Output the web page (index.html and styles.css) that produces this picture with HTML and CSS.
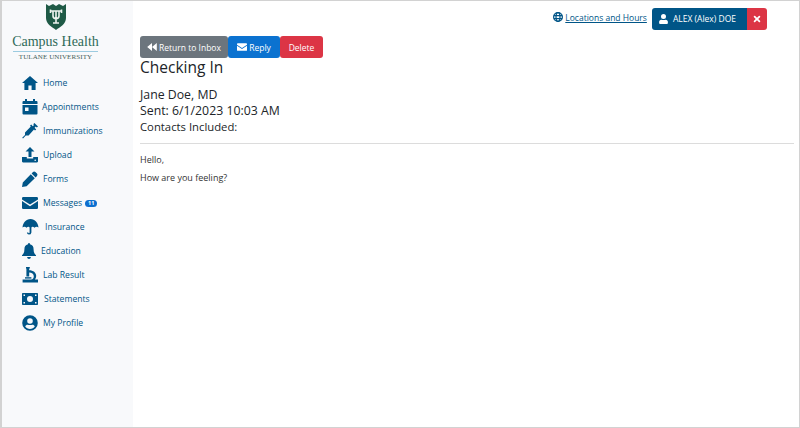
FILE: index.html
```html
<!DOCTYPE html>
<html lang="en">
<head>
<meta charset="utf-8">
<title>Message</title>
<link rel="stylesheet" href="styles.css">
</head>
<body>
<div class="frame">
  <aside class="sidebar">
    <div class="logo">
      <svg class="shield" width="20" height="26" viewBox="0 0 20 26">
        <path d="M0 0 L3 2 L7 0 L10 2 L13 0 L17 2 L20 0 V14 C20 20 14 23 10 26 C6 23 0 20 0 14 Z" fill="#1f5a46"/>
        <path d="M4.5 7 H15.5 M4.5 5.5 V9 M15.5 5.5 V9 M10 7 V19 M7 19 H13 M7 7 V12 C7 15.5 13 15.5 13 12 V7" stroke="#eef3ef" stroke-width="1.6" fill="none"/>
      </svg>
      <div class="logo-name">Campus Health</div>
      <div class="logo-rule"></div>
      <div class="logo-sub">TULANE UNIVERSITY</div>
    </div>
    <nav class="nav">
      <a class="nav-item"><svg class="ico" viewBox="0 0 16 16"><path d="M8 1 L16 8 H13.6 V15 H9.6 V10.4 H6.4 V15 H2.4 V8 H0 Z"/></svg><span class="gap-home">Home</span></a>
      <a class="nav-item"><svg class="ico" viewBox="0 0 16 16"><path d="M3 0 H5 V2 H11 V0 H13 V2 H14.5 Q15.5 2 15.5 3 V5 H.5 V3 Q.5 2 1.5 2 H3 Z M.5 6 H15.5 V14.5 Q15.5 15.5 14.5 15.5 H1.5 Q.5 15.5 .5 14.5 Z"/><rect x="3" y="8.5" width="3.5" height="3.5" fill="#f8f9fb"/></svg><span class="gap-appt">Appointments</span></a>
      <a class="nav-item"><svg class="ico" viewBox="0 0 16 16"><path d="M12.4 0 L16 3.6 L14.8 4.6 L13.8 3.6 L12.6 4.8 L14.2 6.4 L13 7.6 L12 6.6 L6.6 12.4 L3.8 12.6 L1 15.4 L.2 14.8 L3 12 L3 9.4 L8.8 3.6 L8 2.8 L9.2 1.6 L10.8 3.2 L12 2 L11.2 1.2 Z"/></svg><span class="gap-home">Immunizations</span></a>
      <a class="nav-item"><svg class="ico" viewBox="0 0 16 16"><path d="M8 0 L12.5 4.6 H9.5 V10 H6.5 V4.6 H3.5 Z M0 10 H4.8 V11.6 H11.2 V10 H16 V14.6 Q16 15.4 15 15.4 H1 Q0 15.4 0 14.6 Z"/><circle cx="13.2" cy="13.2" r=".8" fill="#f8f9fb"/></svg><span class="gap-up">Upload</span></a>
      <a class="nav-item"><svg class="ico" viewBox="0 0 16 16"><path d="M11 1 Q12.2 0 13.4 1 L15 2.6 Q16 3.8 15 5 L13.6 6.4 L9.6 2.4 Z M8.8 3.2 L12.8 7.2 L4.6 15.2 L0 16 L.8 11.4 Z"/></svg><span class="gap-up">Forms</span></a>
      <a class="nav-item"><svg class="ico" viewBox="0 0 16 16"><path d="M1.2 2 H14.8 Q16 2 16 3.4 V4.4 L8 9.6 L0 4.4 V3.4 Q0 2 1.2 2 Z M0 6 L8 11.2 L16 6 V13 Q16 14 14.8 14 H1.2 Q0 14 0 13 Z"/></svg><span class="gap-up">Messages</span><span class="badge">11</span></a>
      <a class="nav-item"><svg class="ico ico-wide" viewBox="0 0 16 16"><path d="M8 0 C12.5 .3 15.6 3.6 16 8.6 C14.8 7.6 13.2 7.6 12 8.8 C11 7.6 9.4 7.6 8.9 8.4 V13.4 Q8.6 15.6 6.4 15.6 Q4.6 15.4 4.4 13.6 H5.8 Q5.9 14.2 6.4 14.2 Q7.1 14.1 7.1 13.4 V8.4 C6.6 7.6 5 7.6 4 8.8 C2.8 7.6 1.2 7.6 0 8.6 C.4 3.6 3.5 .3 8 0 Z"/></svg><span class="gap-ins">Insurance</span></a>
      <a class="nav-item"><svg class="ico ico-narrow" viewBox="0 0 14 16"><path d="M7 0 Q8 0 8 1.2 C10.6 1.8 11.6 3.8 11.6 6.4 C11.6 9.6 12.6 10.8 14 12.2 V13 H0 V12.2 C1.4 10.8 2.4 9.6 2.4 6.4 C2.4 3.8 3.4 1.8 6 1.2 Q6 0 7 0 Z M5 14 H9 Q8.6 16 7 16 Q5.4 16 5 14 Z"/></svg><span class="gap-edu">Education</span></a>
      <a class="nav-item"><svg class="ico" viewBox="0 0 16 16"><path d="M4 0 H7.8 V1.5 H7.2 V3.2 C11.2 3.2 14.2 5.6 14.2 9 Q14.2 11 13 12.4 H16 V15.4 H.6 V12.4 H9 C11 12.4 11.8 11 11.8 9.2 C11.8 7.2 9.8 5.6 7.2 5.6 V9.5 H4.4 V1.5 H4 Z"/><rect x="3" y="10.2" width="6.4" height="1.4"/></svg><span class="gap-up">Lab Result</span></a>
      <a class="nav-item"><svg class="ico ico-cash" viewBox="0 0 16 12"><path fill-rule="evenodd" d="M.8 0 H15.2 Q16 0 16 .8 V11.2 Q16 12 15.2 12 H.8 Q0 12 0 11.2 V.8 Q0 0 .8 0 Z M8 3 A3 3 0 1 0 8 9 A3 3 0 1 0 8 3 Z M1.5 1.5 V3 H3 V1.5 Z M13 1.5 V3 H14.5 V1.5 Z M1.5 9 V10.5 H3 V9 Z M13 9 V10.5 H14.5 V9 Z"/></svg><span class="gap-stmt">Statements</span></a>
      <a class="nav-item"><svg class="ico" viewBox="0 0 16 16"><path fill-rule="evenodd" d="M8 .2 A7.8 7.8 0 1 0 8 15.8 A7.8 7.8 0 1 0 8 .2 Z M8 3.2 A2.8 2.8 0 1 1 8 8.8 A2.8 2.8 0 1 1 8 3.2 Z M8 14 C6 14 4.2 13 3.2 11.6 C3.6 10.4 4.6 9.8 5.6 9.8 C6.6 10.2 9.4 10.2 10.4 9.8 C11.4 9.8 12.4 10.4 12.8 11.6 C11.8 13 10 14 8 14 Z"/></svg><span class="gap-up">My Profile</span></a>
    </nav>
  </aside>
  <main class="main">
    <header class="topbar">
      <a class="loc"><svg class="globe" viewBox="0 0 16 16"><g fill="none" stroke="#005587" stroke-width="2"><circle cx="8" cy="8" r="7"/><ellipse cx="8" cy="8" rx="3.2" ry="7"/><path d="M1.4 5.6 H14.6 M1.4 10.4 H14.6"/></g></svg> <span class="loc-text">Locations and Hours</span></a>
      <div class="user-group">
        <span class="user-btn"><svg class="user-ico" viewBox="0 0 14 16"><path d="M7 0 A4 4 0 1 1 7 8 A4 4 0 1 1 7 0 Z M3.6 9 C5 9.6 9 9.6 10.4 9 C12.6 9 14 10.6 14 12.6 V14.5 Q14 16 12.5 16 H1.5 Q0 16 0 14.5 V12.6 C0 10.6 1.4 9 3.6 9 Z"/></svg>ALEX (Alex) DOE</span><span class="close-btn"><svg class="x-ico" viewBox="0 0 10 10"><path d="M2 2 L8 8 M8 2 L2 8" stroke="#fff" stroke-width="2.2" stroke-linecap="round"/></svg></span>
      </div>
    </header>
    <div class="content">
      <div class="actions">
        <span class="btn btn-gray"><svg class="btn-ico back" viewBox="0 0 12 10"><path d="M6 0 V10 L0 5 Z M12 0 V10 L6 5 Z"/></svg>Return to Inbox</span><span class="btn btn-blue"><svg class="btn-ico mail" viewBox="0 0 16 12"><path d="M1.2 0 H14.8 Q16 0 16 1.4 V2.4 L8 7.6 L0 2.4 V1.4 Q0 0 1.2 0 Z M0 4 L8 9.2 L16 4 V11 Q16 12 14.8 12 H1.2 Q0 12 0 11 Z"/></svg>Reply</span><span class="btn btn-red">Delete</span>
      </div>
      <h1 class="subject">Checking In</h1>
      <div class="from">Jane Doe, MD</div>
      <div class="sent">Sent: 6/1/2023 10:03 AM</div>
      <div class="contacts">Contacts Included:</div>
      <hr class="rule">
      <p class="body-line">Hello,</p>
      <p class="body-line">How are you feeling?</p>
    </div>
  </main>
</div>
</body>
</html>
```
FILE: styles.css
```css
* { box-sizing: border-box; }
html, body { margin: 0; height: 100%; background: #fff; }
body { font-family: "Open Sans", "Noto Sans", sans-serif; color: #212529; }
.frame { display: flex; width: 800px; height: 428px; border: 1px solid #d2d2d2; border-width: 1px 1px 1px 2px; overflow: hidden; }
.sidebar { width: 131px; flex: none; background: #f8f9fb; }
.logo { display: flex; flex-direction: column; align-items: center; padding-top: 3px; width: 107px; }
.shield { display: block; }
.logo-name { font-family: "Liberation Serif", serif; font-size: 14px; line-height: 16px; color: #2f6a58; margin-top: 4px; white-space: nowrap; }
.logo-rule { width: 85px; height: 1px; background: #9ccbe0; margin-top: 1px; }
.logo-sub { font-family: "Liberation Serif", serif; font-size: 7px; line-height: 10px; color: #44605a; letter-spacing: .1px; white-space: nowrap; }
.nav { display: flex; flex-direction: column; margin-top: 9px; padding-left: 20px; }
.nav-item { display: flex; align-items: center; height: 24px; font-size: 8.6px; color: #005587; white-space: nowrap; }
.ico { width: 16px; height: 16px; fill: #005587; flex: none; }
.ico-narrow { width: 14px; }
.ico-wide { width: 17px; }
.ico-cash { height: 12px; }
.gap-home { margin-left: 5px; }
.gap-appt { margin-left: 4px; }
.gap-up { margin-left: 5px; }
.gap-ins { margin-left: 6px; }
.gap-edu { margin-left: 5px; }
.gap-stmt { margin-left: 6px; }
.badge { margin-left: 3px; background: #0d6fcf; color: #fff; font-size: 5.5px; font-weight: 700; line-height: 7px; padding: 0 3px; border-radius: 4px; }
.main { flex: 1; min-width: 0; padding: 0 5px 0 7px; }
.topbar { display: flex; justify-content: flex-end; align-items: center; height: 28px; padding: 7px 27px 0 0; margin-bottom: 7px; }
.loc { display: flex; align-items: center; font-size: 8.5px; color: #005587; margin-right: 5px; margin-top: -1px; margin-bottom: 2px; }
.globe { width: 10px; height: 10px; margin-right: 2px; }
.loc-text { text-decoration: underline; }
.user-group { display: flex; height: 22px; }
.user-btn { display: flex; align-items: center; background: #005587; color: #fff; font-size: 8.5px; padding: 0 11px 0 7px; border-radius: 3px 0 0 3px; white-space: nowrap; }
.user-ico { width: 9px; height: 10px; fill: #fff; margin-right: 5px; }
.close-btn { display: flex; align-items: center; justify-content: center; width: 20px; background: #dc3545; border-radius: 0 3px 3px 0; }
.x-ico { width: 8px; height: 8px; }
.actions { display: flex; height: 22px; }
.btn { display: flex; align-items: center; justify-content: center; color: #fff; font-size: 8.5px; white-space: nowrap; border-radius: 3px; }
.btn-gray { width: 88px; background: #6c757d; }
.btn-blue { width: 52px; background: #0b72d0; }
.btn-red { width: 43px; background: #dc3545; }
.btn-ico { fill: #fff; margin-right: 2px; }
.back { width: 10px; height: 8px; }
.mail { width: 10px; height: 8px; }
.subject { font-size: 15.5px; font-weight: 400; line-height: 20px; margin: -1px 0 9px; }
.from, .sent { font-size: 12.3px; line-height: 17px; }
.sent { margin-top: -1px; }
.contacts { font-size: 11.3px; line-height: 16px; }
.rule { border: 0; border-top: 1px solid #dcdcdc; margin: 8px 0 10px; }
.body-line { font-size: 9px; line-height: 12px; margin: 0 0 6px; color: #333; }
```
